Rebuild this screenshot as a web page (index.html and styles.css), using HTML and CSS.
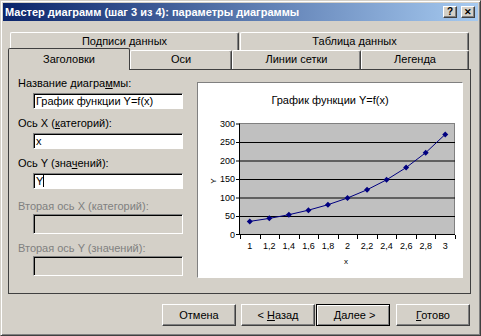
FILE: index.html
```html
<!DOCTYPE html>
<html lang="ru">
<head>
    <meta charset="UTF-8">
    <title>Мастер диаграмм</title>
    <link rel="stylesheet" href="styles.css">
</head>
<body>
    <div class="window">
        <!-- Title bar -->
        <div class="titlebar">
            <span class="title">Мастер диаграмм (шаг 3 из 4): параметры диаграммы</span>
            <span class="caption-btn">?</span>
            <span class="caption-btn close">&#x2715;</span>
        </div>

        <!-- Tabs, two rows -->
        <div class="tabs">
            <div class="tab-row back">
                <div class="tab w-229">Подписи данных</div>
                <div class="tab w-229 second">Таблица данных</div>
            </div>
            <div class="tab-row front">
                <div class="tab selected w-122">Заголовки</div>
                <div class="tab w-102">Оси</div>
                <div class="tab w-129">Линии сетки</div>
                <div class="tab w-108">Легенда</div>
            </div>
        </div>

        <div class="panel">
            <div class="fields">
                <div class="field">
                    <label>Название диагра<u>м</u>мы:</label>
                    <div class="textbox">График функции Y=f(x)</div>
                </div>
                <div class="field">
                    <label>Ось X (<u>к</u>атегорий):</label>
                    <div class="textbox">x</div>
                </div>
                <div class="field">
                    <label>Ось Y (зна<u>ч</u>ений):</label>
                    <div class="textbox">Y<span class="caret"></span></div>
                </div>
                <div class="field disabled first-disabled">
                    <label>Вторая ось X (категорий):</label>
                    <div class="textbox"></div>
                </div>
                <div class="field disabled">
                    <label>Вторая ось Y (значений):</label>
                    <div class="textbox"></div>
                </div>
            </div>

            <div class="preview">
                <svg width="264" height="194" viewBox="0 0 264 194">
                    <text class="chart-title" x="132" y="21" text-anchor="middle">График функции Y=f(x)</text>

                    <!-- plot area -->
                    <rect x="41.5" y="40.5" width="215" height="111" fill="#c0c0c0" stroke="#808080"/>
                    <g stroke="#000" stroke-width="1">
                        <line x1="42" y1="59.5" x2="257" y2="59.5"/>
                        <line x1="42" y1="78" x2="257" y2="78"/>
                        <line x1="42" y1="96.5" x2="257" y2="96.5"/>
                        <line x1="42" y1="115" x2="257" y2="115"/>
                        <line x1="42" y1="133.5" x2="257" y2="133.5"/>
                        <!-- axes -->
                        <line x1="41.5" y1="41" x2="41.5" y2="152"/>
                        <line x1="38" y1="151.5" x2="257" y2="151.5"/>
                        <!-- y ticks -->
                        <line x1="38" y1="41" x2="42" y2="41"/>
                        <line x1="38" y1="59.5" x2="42" y2="59.5"/>
                        <line x1="38" y1="78" x2="42" y2="78"/>
                        <line x1="38" y1="96.5" x2="42" y2="96.5"/>
                        <line x1="38" y1="115" x2="42" y2="115"/>
                        <line x1="38" y1="133.5" x2="42" y2="133.5"/>
                    </g>
                    <g id="xticks" stroke="#000"></g>

                    <g class="tick-label" text-anchor="end">
                        <text x="37" y="44">300</text>
                        <text x="37" y="62">250</text>
                        <text x="37" y="81">200</text>
                        <text x="37" y="99">150</text>
                        <text x="37" y="118">100</text>
                        <text x="37" y="136">50</text>
                        <text x="37" y="155">0</text>
                    </g>
                    <g id="xlabels" class="tick-label" text-anchor="middle"></g>

                    <polyline id="series" fill="none" stroke="#000080" stroke-width="1"/>
                    <g id="markers" fill="#000080"></g>

                    <text class="axis-title" x="18" y="98" text-anchor="middle" transform="rotate(-90 18 98)">Y</text>
                    <text class="axis-title" x="148" y="181" text-anchor="middle">x</text>
                </svg>
            </div>
        </div>

        <div class="buttons">
            <div class="btn cancel">Отмена</div>
            <div class="btn back-btn">&lt; <u>Н</u>азад</div>
            <div class="btn default">&nbsp;<u>Д</u>алее &gt;</div>
            <div class="btn finish"><u>Г</u>отово</div>
        </div>
    </div>

    <script>
        // y = 100 * e^(x - 2), x from 1 to 3 step 0.2
        var ns = 'http://www.w3.org/2000/svg';
        var left = 42, top0 = 152, step = 215 / 11;
        var points = [];

        for (let i = 0; i <= 10; i++) {
            let x = 1 + i * 0.2;
            let v = 100 * Math.exp(x - 2);
            let px = left + step * (i + 0.5);
            let py = top0 - v * 111 / 300;
            points.push(px.toFixed(1) + ',' + py.toFixed(1));

            let m = document.createElementNS(ns, 'polygon');
            m.setAttribute('points', `${px},${py - 3} ${px + 3},${py} ${px},${py + 3} ${px - 3},${py}`);
            document.getElementById('markers').appendChild(m);

            let t = document.createElementNS(ns, 'text');
            t.setAttribute('x', px);
            t.setAttribute('y', 166);
            t.textContent = (Math.round(x * 10) / 10).toString().replace('.', ',');
            document.getElementById('xlabels').appendChild(t);
        }

        for (let k = 0; k <= 11; k++) {
            let tx = Math.round(left + step * k) + 0.5;
            let l = document.createElementNS(ns, 'line');
            l.setAttribute('x1', tx);
            l.setAttribute('x2', tx);
            l.setAttribute('y1', 152);
            l.setAttribute('y2', 156);
            document.getElementById('xticks').appendChild(l);
        }

        document.getElementById('series').setAttribute('points', points.join(' '));
    </script>
</body>
</html>
```

FILE: styles.css
```css
body {
    margin: 0;
    font-family: 'Liberation Sans', Arial, sans-serif;
    font-size: 11px;
    color: #000;
    background: #d4d0c8;
}

.window {
    width: 481px;
    height: 336px;
    box-sizing: border-box;
    padding: 2px;
    background: #d4d0c8;
    border: 1px solid;
    border-color: #d4d0c8 #404040 #404040 #d4d0c8;
    box-shadow: inset 1px 1px #fff, inset -1px -1px #808080;
}

.titlebar {
    height: 18px;
    display: flex;
    align-items: center;
    padding: 0 3px 0 2px;
    background: linear-gradient(to right, #0a246a, #a6caf0);
    color: #fff;
}

.title {
    flex: 1;
    font-weight: bold;
    font-size: 11px;
    white-space: nowrap;
}

.caption-btn {
    width: 14px;
    height: 12px;
    margin-left: 2px;
    box-sizing: border-box;
    background: #d4d0c8;
    color: #000;
    font-size: 10px;
    font-weight: bold;
    line-height: 10px;
    text-align: center;
    border: 1px solid;
    border-color: #fff #404040 #404040 #fff;
    box-shadow: inset -1px -1px #808080;
}

.caption-btn.close {
    margin-left: 4px;
    font-size: 9px;
}

/* tabs */

.tabs {
    margin-top: 11px;
    margin-left: 5px;
}

.tab-row {
    display: flex;
}

.tab-row.back {
    padding-left: 2px;
    height: 18px;
}

.tab-row.front {
    height: 19px;
    padding-left: 1px;
    position: relative;
    z-index: 1;
}

.tab {
    box-sizing: border-box;
    height: 100%;
    text-align: center;
    line-height: 17px;
    border: 1px solid;
    border-bottom: none;
    border-color: #fff #404040 #fff #fff;
    border-radius: 2px 2px 0 0;
    box-shadow: inset -1px 0 #808080;
}

.tab.second {
    margin-left: 1px;
}

.tab.selected {
    height: 22px;
    margin-top: -2px;
    margin-left: -1px;
    line-height: 20px;
    border-color: #404040;
    box-shadow: none;
    background: #d4d0c8;
}

.w-229 { width: 229px; }
.w-122 { width: 122px; }
.w-102 { width: 102px; }
.w-129 { width: 129px; }
.w-108 { width: 108px; }

/* panel */

.panel {
    margin-left: 5px;
    width: 463px;
    height: 225px;
    box-sizing: border-box;
    border: 1px solid #404040;
    display: flex;
    padding: 7px 0 0 9px;
}

.fields {
    width: 179px;
}

.field {
    margin-bottom: 8px;
}

.field label {
    display: block;
    line-height: 13px;
    margin-bottom: 3px;
    white-space: nowrap;
}

.textbox {
    margin-left: 15px;
    width: 150px;
    height: 16px;
    box-sizing: border-box;
    background: #fff;
    border: 1px solid;
    border-color: #808080 #fff #fff #808080;
    box-shadow: inset 1px 1px #000;
    padding-left: 2px;
    line-height: 14px;
    white-space: nowrap;
}

.caret {
    display: inline-block;
    width: 1px;
    height: 12px;
    background: #000;
    vertical-align: -2px;
}

.field.first-disabled {
    margin-top: 11px;
}

.field.disabled label {
    color: #808080;
    margin-bottom: 1px;
}

.field.disabled .textbox {
    height: 20px;
    background: #d4d0c8;
    margin-bottom: 0;
}

.preview {
    margin-top: 5px;
    width: 266px;
    height: 196px;
    box-sizing: border-box;
    background: #fff;
    border: 1px solid;
    border-color: #808080 #fff #fff #808080;
}

.preview svg {
    display: block;
    font-family: 'Liberation Sans', Arial, sans-serif;
}

.chart-title {
    font-size: 11px;
}

.tick-label {
    font-size: 9px;
}

.axis-title {
    font-size: 8px;
}

/* buttons */

.buttons {
    display: flex;
    margin-top: 10px;
    padding-left: 159px;
}

.btn {
    width: 74px;
    height: 22px;
    box-sizing: border-box;
    text-align: center;
    line-height: 20px;
    border: 1px solid;
    border-color: #fff #404040 #404040 #fff;
    box-shadow: inset -1px -1px #808080;
}

.btn.back-btn {
    margin-left: 5px;
}

.btn.default {
    margin-left: 1px;
    border-color: #000;
    box-shadow: inset 1px 1px #fff, inset -1px -1px #808080;
}

.btn.finish {
    margin-left: 6px;
}
```
